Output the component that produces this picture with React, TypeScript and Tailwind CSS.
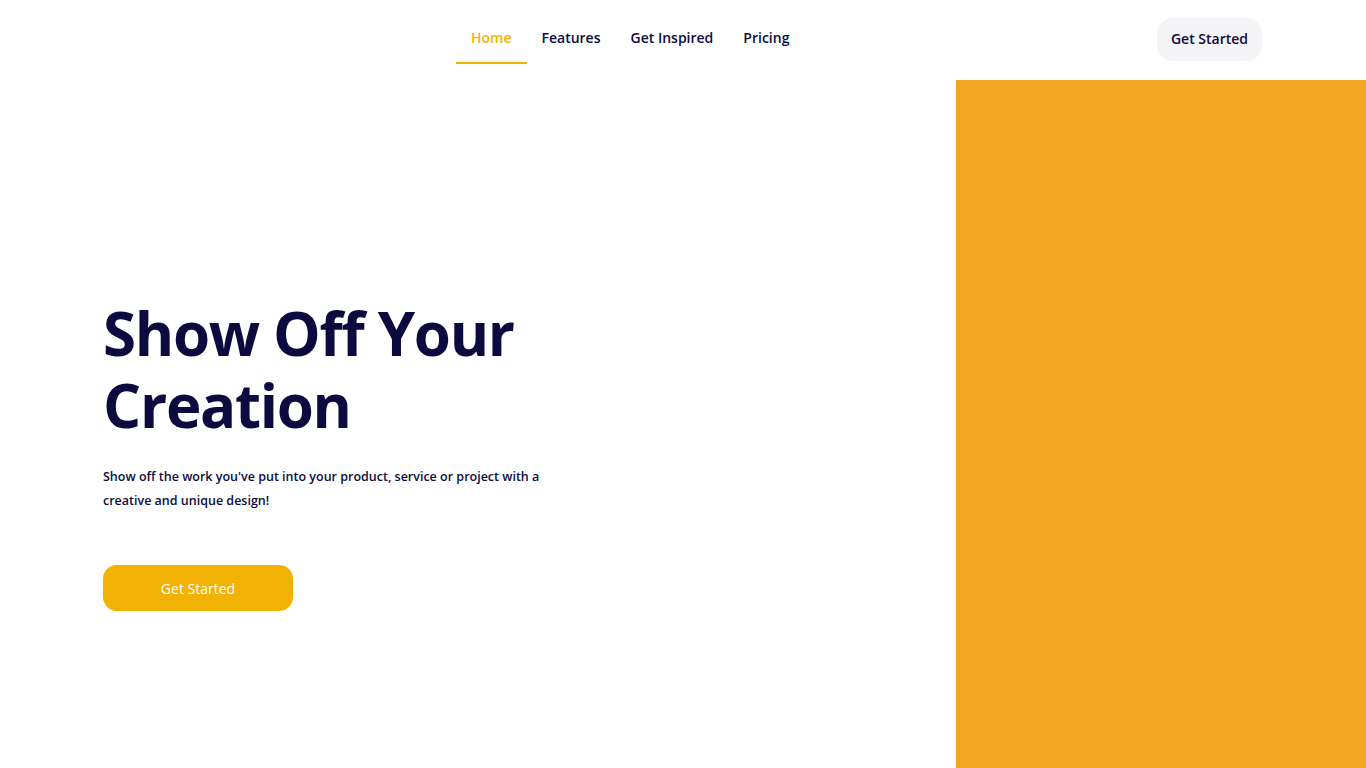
import React from "react";

export default function App() {
  const font = { fontFamily: '"Open Sans", "Noto Sans", sans-serif' };
  return (
    <div className="relative w-full h-[768px] bg-white overflow-hidden" style={font}>
      <div className="absolute left-[956px] top-[80px] w-[410px] h-[688px] bg-[#F3A524]" />
      <header className="relative flex items-start h-[80px]">
        <nav className="flex ml-[456px]">
          <a className="px-[15px] h-[64px] flex items-center text-[14px] font-semibold text-[#F2B203] border-b-2 border-[#F2B203] pt-[12px]">Home</a>
          <a className="px-[15px] h-[64px] flex items-center text-[14px] font-semibold text-[#0E0B3F] pt-[12px] pb-[2px]">Features</a>
          <a className="px-[15px] h-[64px] flex items-center text-[14px] font-semibold text-[#0E0B3F] pt-[12px] pb-[2px]">Get Inspired</a>
          <a className="px-[15px] h-[64px] flex items-center text-[14px] font-semibold text-[#0E0B3F] pt-[12px] pb-[2px]">Pricing</a>
        </nav>
        <button className="ml-auto mr-[104px] mt-[18px] w-[105px] h-[43px] pb-[2px] rounded-[16px] bg-[#F4F4F7] text-[14px] font-semibold text-[#0E0B3F]">Get Started</button>
      </header>
      <main className="relative pl-[103px] pt-[217px]">
        <h1 className="text-[60px] leading-[72px] font-bold text-[#0C0A3E] tracking-[-1.3px]">Show Off Your<br />Creation</h1>
        <p className="mt-[24px] text-[12.5px] leading-[24px] font-semibold text-[#0E0B3F] w-[460px]">Show off the work you've put into your product, service or project with a creative and unique design!</p>
        <button className="mt-[52px] w-[190px] h-[46px] rounded-[14px] bg-[#F2B203] text-white text-[14px]">Get Started</button>
      </main>
    </div>
  );
}
